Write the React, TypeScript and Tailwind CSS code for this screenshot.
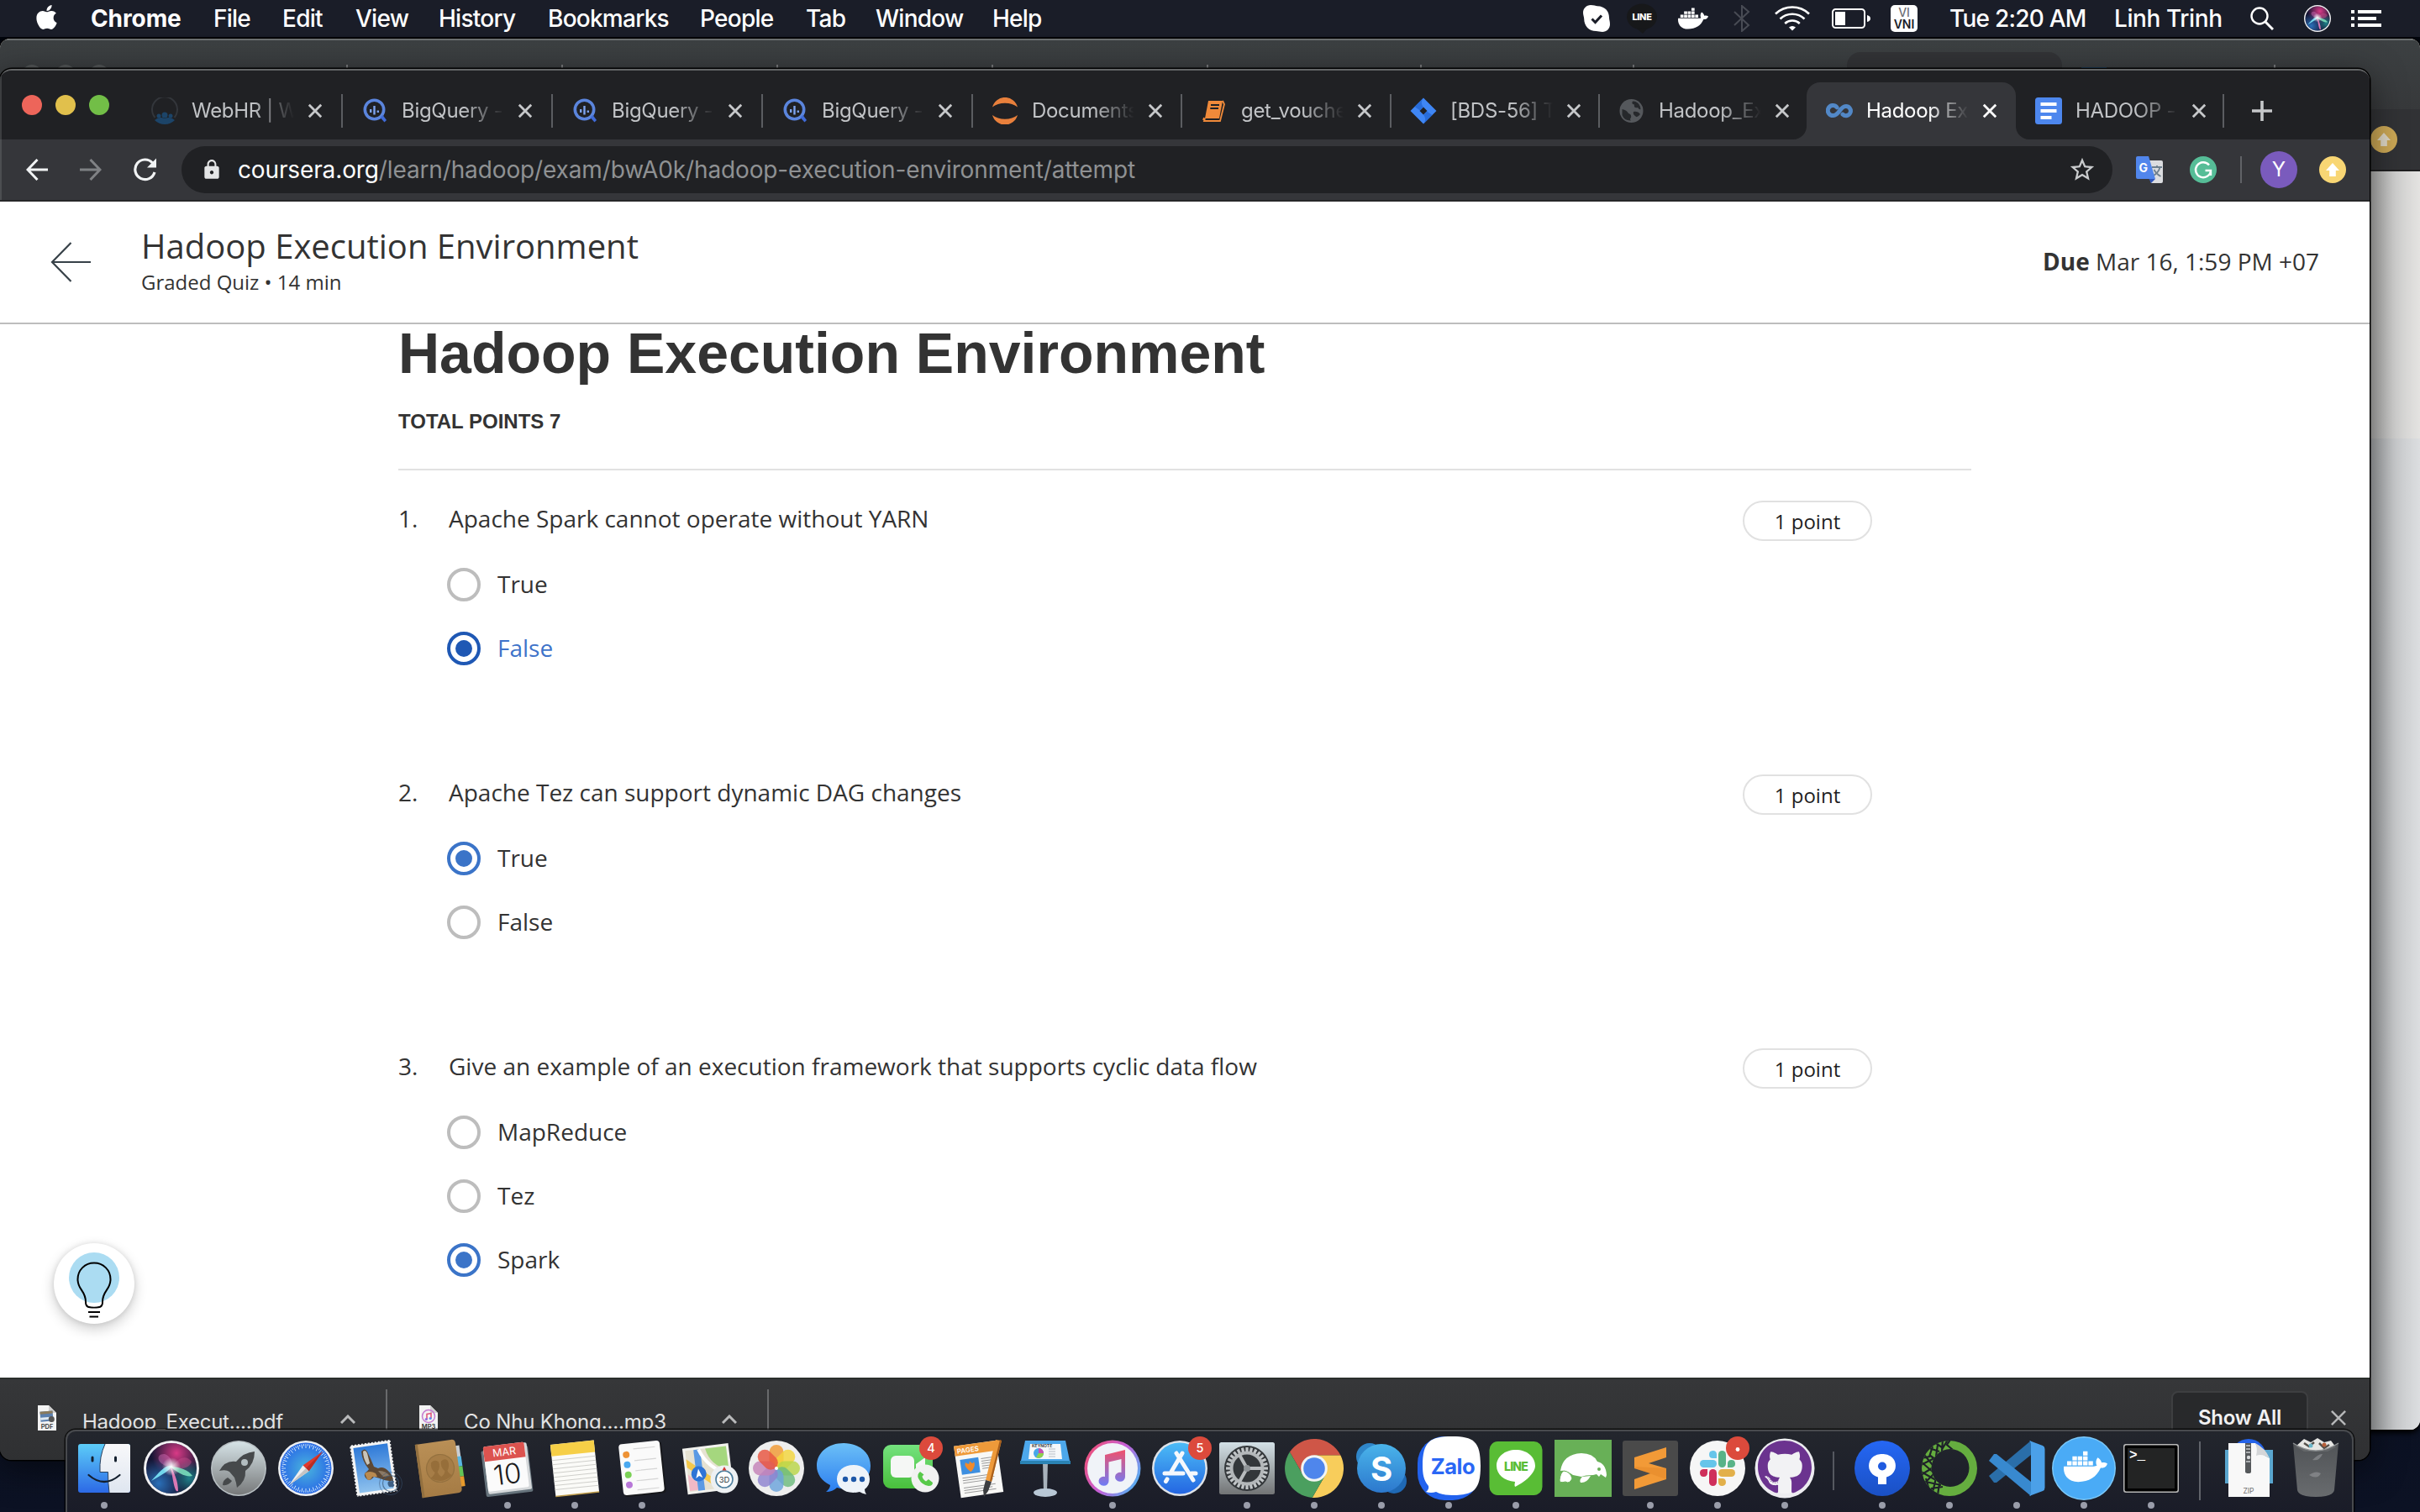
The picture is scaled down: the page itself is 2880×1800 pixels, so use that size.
import type { ReactNode } from "react";
import { FaApple, FaDocker, FaGithub } from "react-icons/fa";
import { MdLock, MdStarBorder } from "react-icons/md";

/* ---------- Menu bar ---------- */

const MENUS = [
  { label: "File", cell: "w-[82px]" },
  { label: "Edit", cell: "w-[87px]" },
  { label: "View", cell: "w-[99px]" },
  { label: "History", cell: "w-[130px]" },
  { label: "Bookmarks", cell: "w-[181px]" },
  { label: "People", cell: "w-[126px]" },
  { label: "Tab", cell: "w-[83px]" },
  { label: "Window", cell: "w-[139px]" },
  { label: "Help", cell: "w-[80px]" },
];

function SiriArt({ r }: { r: number }) {
  return (
    <g transform={`scale(${r / 33})`}>
      <circle r="33" fill="#f1f1f3" />
      <circle r="30" fill="#151433" />
      <circle r="30" fill="url(#siriPink)" />
      <circle r="30" fill="url(#siriBlue)" />
      <circle r="30" fill="url(#siriGreen)" />
      <path d="M-1 -1 C-20 -6 -18 -18 -8 -17 C0 -14 2 -6 1 0 Z" fill="#e07ac9" opacity=".4" />
      <path d="M0 0 C8 -14 18 -16 24 -8 C22 0 10 2 0 0 Z" fill="#c9508f" opacity=".45" />
      <path d="M-24 15 C-14 4 -8 -4 0 -3 C0 2 -12 8 -24 15 Z" fill="#7fefff" opacity=".85" />
      <path d="M-1 -2 C10 -2 20 2 25 9 C18 11 6 5 -1 -2 Z" fill="#7fe6c0" opacity=".85" />
      <path d="M-1 -2 C4 6 8 16 8 27 C4 30 2 14 -1 -2 Z" fill="#f07fbd" opacity=".9" />
      <circle cy="-2" r="11" fill="url(#siriGlow)" />
    </g>
  );
}

function StatusCell({ cell, children }: { cell: string; children: ReactNode }) {
  return <div className={`flex shrink-0 items-center justify-center ${cell}`}>{children}</div>;
}

function MenuBar() {
  return (
    <header className="flex h-11 items-center bg-[#1a1d28] text-[28px] leading-[44px] font-medium tracking-[-0.75px] text-white">
      <div className="flex w-[108px] justify-center pb-1 pl-[2px]">
        <FaApple size={33} />
      </div>
      <div className="w-[146px] font-bold tracking-[-0.1px]">Chrome</div>
      {MENUS.map((m) => (
        <div key={m.label} className={m.cell}>
          {m.label}
        </div>
      ))}
      <div className="ml-auto flex h-11 items-center pr-[44px] whitespace-nowrap">
        <StatusCell cell="w-[54px]">
          <svg width="32" height="32" viewBox="0 0 32 32">
            <path d="M9 0 C13 0 15 1.200 17 1.200 C26 1.500 31 7 31 15 C31 17.500 32 19 32 23 C32 28 28 32 23 32 C20 32 18 31 15.500 31 C7 31 1.200 25 1.200 16.500 C1.200 14 0 12 0 9 C0 4 4 0 9 0 Z" fill="#fff" />
            <path d="M10.500 16.500 L14.500 20.500 L22 12.500" stroke="#1a1d28" strokeWidth="3" fill="none" />
          </svg>
        </StatusCell>
        <StatusCell cell="w-[54px]">
          <svg width="36" height="36" viewBox="0 0 36 36">
            <ellipse cx="18" cy="16" rx="18" ry="15.500" fill="#17181a" />
            <path d="M12 30 L19 36 L25 29 Z" fill="#17181a" />
            <text x="18" y="20" textAnchor="middle" fontFamily="Inter" fontWeight="800" fontSize="11" letterSpacing="-0.4" fill="#fff">LINE</text>
          </svg>
        </StatusCell>
        <StatusCell cell="w-[68px]">
          <FaDocker size={36} />
        </StatusCell>
        <StatusCell cell="w-[48px]">
          <svg width="20" height="32" viewBox="0 0 20 32" fill="none" stroke="#484b54" strokeWidth="2">
            <path d="M1 8 L18 24 L10 31 V1 L18 8 L1 24" />
          </svg>
        </StatusCell>
        <StatusCell cell="w-[72px]">
          <svg width="42" height="30" viewBox="0 0 42 30" fill="none" stroke="#fff" strokeWidth="2.600">
            <path d="M1 9.500 A29 29 0 0 1 41 9.500" />
            <path d="M6.500 15.500 A21 21 0 0 1 35.500 15.500" />
            <path d="M12.200 21 A13 13 0 0 1 29.800 21" />
            <path d="M17 25.500 A6 6 0 0 1 25 25.500 L21 29.500 Z" fill="#fff" stroke="none" />
          </svg>
        </StatusCell>
        <StatusCell cell="w-[68px]">
          <svg width="46" height="24" viewBox="0 0 46 24">
            <rect x="1" y="1" width="38" height="22" rx="3.500" fill="none" stroke="#fff" strokeWidth="2" />
            <rect x="4" y="4" width="12" height="16" fill="#fff" />
            <path d="M42 8 Q46 9 46 12 Q46 15 42 16 Z" fill="#fff" />
          </svg>
        </StatusCell>
        <StatusCell cell="w-[58px]">
          <div className="flex h-8 w-8 flex-col items-center rounded-[5px] bg-white pt-[2px] text-[14px] leading-[14px] font-semibold tracking-normal text-[#1a1d28]">
            <span className="font-medium text-[#6d6f77]">VI</span>
            <span>VNI</span>
          </div>
        </StatusCell>
        <div className="ml-[25px] w-[196px]">Tue 2:20 AM</div>
        <div className="w-[148px] tracking-[-0.4px]">Linh Trinh</div>
        <StatusCell cell="w-[56px]">
          <svg width="28" height="28" viewBox="0 0 28 28" fill="none" stroke="#fff" strokeWidth="2.400">
            <circle cx="11" cy="11" r="9.500" />
            <path d="M18 18 L27 27" strokeWidth="3" />
          </svg>
        </StatusCell>
        <StatusCell cell="w-[76px]">
          <svg width="32" height="32" viewBox="-16 -16 32 32">
            <SiriArt r={16} />
          </svg>
        </StatusCell>
        <StatusCell cell="w-[40px]">
          <svg width="36" height="20" viewBox="0 0 36 20" fill="#fff">
            <path d="M0 0h4v4h-4z M8 0h28v4h-28z M0 8h4v4h-4z M8 8h22v4h-22z M0 16h4v4h-4z M8 16h28v4h-28z" />
          </svg>
        </StatusCell>
      </div>
    </header>
  );
}

/* ---------- Window behind ---------- */

function BackWindow() {
  return (
    <div className="absolute top-[46px] left-0 flex h-[1656px] w-[2880px] flex-col overflow-hidden rounded-[12px] bg-[#e3e2e1] shadow-[0_0_0_1px_#000,0_4px_6px_#000]">
      <div className="relative flex h-[84px] shrink-0 items-start border-t-2 border-[#6b6f70] bg-linear-to-b from-[#3c4042] to-[#37393b]">
        <div className="flex pt-[29px] pl-[26px]">
          <span className="mr-4 size-6 rounded-full bg-[#535657]" />
          <span className="mr-4 size-6 rounded-full bg-[#535657]" />
          <span className="size-6 rounded-full bg-[#535657]" />
        </div>
        {["ml-[282px]", "ml-[254px]", "ml-[254px]", "ml-[254px]", "ml-[254px]", "ml-[252px]", "ml-[251px]"].map((m, i) => (
          <span key={i} className={`mt-[29px] h-10 w-[2px] bg-[#77797b] ${m}`} />
        ))}
        <span className="mt-[14px] ml-[253px] h-[70px] w-[256px] rounded-t-2xl bg-[#323336]" />
        <span className="mt-[32px] ml-[23px] h-8 w-[30px] bg-[#2f6490]" />
        <span className="mt-[29px] ml-[199px] h-10 w-[2px] bg-[#77797b]" />
      </div>
      <div className="flex h-[74px] shrink-0 items-center justify-end border-b-2 border-[#1f1f20] bg-[#313235] pr-[27px]">
        <span className="flex size-8 items-center justify-center rounded-full bg-[#cba755]">
          <UpArrow color="#ddd6c4" />
        </span>
      </div>
      <div className="flex h-[318px] shrink-0 justify-end bg-[#e5e4e2]">
        <div className="w-[60px] bg-linear-to-r from-[#a9a9a8] via-[#cfcfce] to-[#e4e3e1]" />
      </div>
      <div className="flex flex-1 justify-end bg-[#dcdee0]">
        <div className="w-[60px] bg-linear-to-r from-[#9fa1a3] via-[#c8cacc] to-[#dcdee0]" />
      </div>
    </div>
  );
}

function UpArrow({ color }: { color: string }) {
  return (
    <svg width="16" height="16" viewBox="0 0 16 16" fill={color}>
      <path d="M8 0 L16 9 H11.800 V16 H4.200 V9 H0 Z" />
    </svg>
  );
}

/* ---------- Browser tabs ---------- */

const BigQueryIcon = (
  <svg width="32" height="32" viewBox="0 0 32 32" fill="none">
    <circle cx="15.500" cy="14.500" r="11.200" stroke="#5b85dd" strokeWidth="3.600" />
    <path d="M22.500 24 L25.500 21 L30 27 L27.500 29.500 Z" fill="#3f6ad8" />
    <path d="M11.200 14 V18 M15.500 10 V20.500 M19.800 15.500 V18" stroke="#7ea4ef" strokeWidth="2.400" />
  </svg>
);

const TABS: { title: string; cell: string; icon: ReactNode; active?: boolean; sep?: boolean }[] = [
  {
    title: "WebHR | W",
    cell: "w-[250px]",
    sep: true,
    icon: (
      <svg width="32" height="32" viewBox="0 0 32 32">
        <path d="M4.500 24 A15 15 0 1 1 27.500 24" fill="none" stroke="#33363b" strokeWidth="2" />
        <g fill="#1c4468">
          <circle cx="16" cy="21" r="3.500" />
          <circle cx="9" cy="22" r="2.500" />
          <circle cx="23" cy="22" r="2.500" />
          <path d="M4 27 Q9 22.500 16 25 Q23 22.500 28 27 Q23 32 16 32 Q9 32 4 27 Z" />
        </g>
      </svg>
    ),
  },
  { title: "BigQuery -", cell: "w-[250px]", sep: true, icon: BigQueryIcon },
  { title: "BigQuery -", cell: "w-[250px]", sep: true, icon: BigQueryIcon },
  { title: "BigQuery -", cell: "w-[250px]", sep: true, icon: BigQueryIcon },
  {
    title: "Documents",
    cell: "w-[249px]",
    sep: true,
    icon: (
      <svg width="32" height="32" viewBox="0 0 32 32" fill="#e8803c">
        <path d="M1 11.500 A15.500 15.500 0 0 1 31 11.500 A20 14 0 0 0 1 11.500 Z" />
        <path d="M1 21 A15.500 15.500 0 0 0 31 21 A20 14 0 0 1 1 21 Z" />
      </svg>
    ),
  },
  {
    title: "get_vouche",
    cell: "w-[249px]",
    sep: true,
    icon: (
      <svg width="32" height="32" viewBox="0 0 32 32">
        <path d="M9 4 H26 L22 25 H5 Z" fill="#f08a3a" />
        <path d="M26 4 L28 8 L23 28 H4 L5 25 M4 24 L3 27" fill="none" stroke="#f08a3a" strokeWidth="1.800" />
        <path d="M12 9 H22 M11.300 13 H21" stroke="#202124" strokeWidth="1.800" />
      </svg>
    ),
  },
  {
    title: "[BDS-56] T",
    cell: "w-[248px]",
    sep: true,
    icon: (
      <svg width="32" height="32" viewBox="0 0 32 32">
        <path d="M16 0.500 L31.500 16 L16 31.500 L0.500 16 Z M16 11.500 L11.500 16 L16 20.500 L20.500 16 Z" fill="#3f86f4" fillRule="evenodd" />
        <path d="M16 0.500 Q11.500 6 16 11.500 L12 15.500 L5.500 11 Z M16 31.500 Q20.500 26 16 20.500 L20 16.500 L26.500 21 Z" fill="#2263cf" opacity=".75" />
      </svg>
    ),
  },
  {
    title: "Hadoop_Ex",
    cell: "w-[247px]",
    icon: (
      <svg width="32" height="32" viewBox="0 0 32 32">
        <circle cx="15.500" cy="16" r="14" fill="#55585c" />
        <path d="M4.500 14 Q10 15 12 19 Q16 20 15 24 Q13 26 15 27.500 Q7 28 4.500 21 Z M17 4.500 Q15 8 19 8.500 Q18 13 23 12 Q25 15 26.500 14 Q26 7 20 4.700 Z M18 17 Q23 16 26 20 Q22 25 20 22 Q17 20 18 17 Z" fill="#26282b" />
      </svg>
    ),
  },
  {
    title: "Hadoop Ex",
    cell: "w-[249px]",
    active: true,
    icon: (
      <svg width="32" height="32" viewBox="0 0 32 32" fill="none" stroke="#5288c7" strokeWidth="5" strokeLinecap="round">
        <path d="M13 11.800 A6 6 0 1 0 9 21.500 C15.500 21.500 17 10.500 23.500 10.500 A5.600 5.600 0 1 1 20 20.200" />
      </svg>
    ),
  },
  {
    title: "HADOOP -",
    cell: "w-[247px]",
    sep: true,
    icon: (
      <svg width="32" height="32" viewBox="0 0 32 32">
        <rect width="32" height="32" rx="3.500" fill="#4d87ee" />
        <path d="M6.500 6h19v4h-19z M6.500 14h19v4h-19z M6.500 22h13v4h-13z" fill="#fff" />
      </svg>
    ),
  },
];

function Cross({ size, color, width = 2.8 }: { size: number; color: string; width?: number }) {
  return (
    <svg width={size} height={size} viewBox="0 0 16 16" stroke={color} strokeWidth={width} className="shrink-0 overflow-visible">
      <path d="M0.800 0.800 L15.200 15.200 M15.200 0.800 L0.800 15.200" />
    </svg>
  );
}

function TabStrip() {
  return (
    <div className="flex h-[82px] shrink-0 items-end bg-[#202124] shadow-[inset_2px_0_0_#3c3e40]">
      <div className="flex h-[68px] w-[157px] shrink-0 pt-[15px] pl-[26px]">
        <span className="mr-4 size-6 rounded-full bg-[#ed655a]" />
        <span className="mr-4 size-6 rounded-full bg-[#e1c04c]" />
        <span className="size-6 rounded-full bg-[#72be47]" />
      </div>
      {TABS.map((t, i) => (
        <div
          key={i}
          className={`relative flex h-[68px] shrink-0 items-center pl-[23px] ${t.cell} ${
            t.active ? "rounded-t-2xl bg-[#35363a] text-white" : "text-[#c1c3c6]"
          }`}
        >
          {t.active && (
            <>
              <svg className="absolute bottom-0 -left-4" width="16" height="16">
                <path d="M0 16 A16 16 0 0 0 16 0 V16 Z" fill="#35363a" />
              </svg>
              <svg className="absolute -right-4 bottom-0" width="16" height="16">
                <path d="M16 16 A16 16 0 0 1 0 0 V16 Z" fill="#35363a" />
              </svg>
            </>
          )}
          <span className="shrink-0">{t.icon}</span>
          <span className="ml-4 w-[122px] shrink-0 overflow-hidden mask-r-from-60% mask-r-to-100% text-[24px] leading-[34px] tracking-[-0.3px] whitespace-nowrap">
            {t.title}
          </span>
          <span className="ml-[17px]">
            <Cross size={16} color={t.active ? "#fff" : "#c6c8ca"} />
          </span>
          {t.sep && <span className="absolute right-[-1px] h-10 w-[2px] bg-[#5b5d61]" />}
        </div>
      ))}
      <div className="flex h-[68px] w-[92px] items-center justify-center">
        <svg width="24" height="24" viewBox="0 0 24 24" stroke="#c6c8ca" strokeWidth="3.600">
          <path d="M12 0 V24 M0 12 H24" />
        </svg>
      </div>
    </div>
  );
}

/* ---------- Toolbar ---------- */

function Toolbar() {
  return (
    <div className="flex h-[72px] shrink-0 items-center bg-[#35363a] shadow-[inset_2px_0_0_#4c4e51]">
      <div className="flex w-[216px] shrink-0 items-center pl-[31px]">
        <svg width="26" height="26" viewBox="0 0 26 26" fill="none" stroke="#f1f3f4" strokeWidth="3">
          <path d="M26 13 H2 M13.500 1 L2 13 L13.500 25" />
        </svg>
        <svg className="ml-[38px]" width="26" height="26" viewBox="0 0 26 26" fill="none" stroke="#7f8184" strokeWidth="3">
          <path d="M0 13 H24 M12.500 1 L24 13 L12.500 25" />
        </svg>
        <svg className="ml-[38px]" width="28" height="28" viewBox="0 0 28 28" fill="none" stroke="#f1f3f4" strokeWidth="3.200">
          <path d="M25 17 A11.800 11.800 0 1 1 22.500 6" />
          <path d="M27 0.500 V11.500 H16 Z" fill="#f1f3f4" stroke="none" />
        </svg>
      </div>
      <div className="flex h-14 w-[2298px] shrink-0 items-center rounded-full bg-[#202124] pl-[23px]">
        <MdLock size={26} color="#e4e5e6" />
        <div className="ml-[18px] text-[28px] leading-10 tracking-[-0.13px] whitespace-nowrap text-[#8f9193]">
          <span className="text-white">coursera.org</span>
          <span>/learn/hadoop/exam/bwA0k/hadoop-execution-environment/attempt</span>
        </div>
        <MdStarBorder size={34} color="#c9cbcd" className="mr-[19px] ml-auto" />
      </div>
      <svg className="ml-[28px] shrink-0" width="32" height="32" viewBox="0 0 32 32">
        <path d="M12 5 H30 Q32 5 32 7 V30 Q32 32 30 32 H18 Z" fill="#dcdde0" />
        <path d="M19 13 H31 M25 11 V13 M28.500 13 Q27 20 19 24 M21.500 16 Q24 21 29.500 24" stroke="#6f8190" strokeWidth="1.800" fill="none" />
        <path d="M2 0 H15 L23 27 H2 Q0 27 0 25 V2 Q0 0 2 0 Z" fill="#5186ec" />
        <path d="M15.500 27 H23 L18 32 Z" fill="#2f54b8" />
        <text x="3.500" y="18.500" fontFamily="Inter" fontWeight="700" fontSize="14" fill="#fff">G</text>
      </svg>
      <svg className="ml-[32px] shrink-0" width="32" height="32" viewBox="0 0 32 32">
        <circle cx="16" cy="16" r="16" fill="#56bd97" />
        <path d="M23 10.500 A9 9 0 1 0 25 17 H18.500 M25 17 V23" fill="none" stroke="#fff" strokeWidth="2.400" />
      </svg>
      <span className="ml-[28px] h-8 w-[2px] shrink-0 bg-[#606266]" />
      <span className="ml-[22px] flex size-11 shrink-0 items-center justify-center rounded-full bg-[#7a5bbd] text-[24px] leading-none text-white">
        Y
      </span>
      <span className="ml-[26px] flex size-8 shrink-0 items-center justify-center rounded-full bg-[#f8d674]">
        <UpArrow color="#fff" />
      </span>
    </div>
  );
}

/* ---------- Page ---------- */

type Choice = { text: string; selected?: boolean; focused?: boolean };

const QUESTIONS: { text: string; choices: Choice[] }[] = [
  {
    text: "Apache Spark cannot operate without YARN",
    choices: [{ text: "True" }, { text: "False", selected: true, focused: true }],
  },
  {
    text: "Apache Tez can support dynamic DAG changes",
    choices: [{ text: "True", selected: true }, { text: "False" }],
  },
  {
    text: "Give an example of an execution framework that supports cyclic data flow",
    choices: [{ text: "MapReduce" }, { text: "Tez" }, { text: "Spark", selected: true }],
  },
];

function Radio({ selected, focused }: Choice) {
  const ring = focused ? "border-[#1f58b4]" : selected ? "border-[#3b74c8]" : "border-[#bdbdbd]";
  const dot = focused ? "bg-[#1f58b4]" : "bg-[#3b74c8]";
  return (
    <span className={`flex size-10 shrink-0 items-center justify-center rounded-full border-4 ${ring}`}>
      {selected && <span className={`size-5 rounded-full ${dot}`} />}
    </span>
  );
}

function Question({ index, text, choices }: { index: number; text: string; choices: Choice[] }) {
  return (
    <section className="h-[326px]">
      <div className="flex h-12 items-center">
        <div className="w-[60px] pb-[6px]">{index}.</div>
        <div className="flex-1 pb-[6px]">{text}</div>
        <div className="mr-[118px] flex h-12 w-[154px] items-center justify-center rounded-[24px] border-2 border-[#e1e1e1] pt-[1px] text-[24px] text-[#1f1f1f]">
          1 point
        </div>
      </div>
      <div className="flex flex-col gap-9 pt-8 pl-[58px]">
        {choices.map((c) => (
          <label key={c.text} className="flex h-10 items-center gap-5">
            <Radio {...c} />
            <span className={`pb-[2px] ${c.focused ? "text-[#3e73c9]" : ""}`}>{c.text}</span>
          </label>
        ))}
      </div>
    </section>
  );
}

function Page() {
  return (
    <main className="flex h-[1400px] shrink-0 flex-col overflow-hidden bg-white font-['Open_Sans',sans-serif] text-[28px] leading-10 tracking-normal text-[#333]">
      <div className="flex h-[146px] shrink-0 items-center border-b-2 border-[#bdbdbd]">
        <svg className="ml-[60px]" width="48" height="48" viewBox="0 0 48 48" fill="none" stroke="#374148" strokeWidth="2.200">
          <path d="M48 24 H2 M24.500 1 L2 24 L24.500 47" />
        </svg>
        <div className="flex flex-col pb-[3px] pl-[60px]">
          <h1 className="text-[40px] leading-[48px]">Hadoop Execution Environment</h1>
          <div className="mt-[3px] text-[24px] leading-8">Graded Quiz • 14 min</div>
        </div>
        <div className="mr-[60px] ml-auto pb-[2px]">
          <b className="font-bold">Due</b> Mar 16, 1:59 PM +07
        </div>
      </div>
      <div className="ml-[474px] w-[1872px] shrink-0">
        <h2 className="font-['Liberation_Sans',sans-serif] text-[68px] leading-[68px] font-bold">
          Hadoop Execution Environment
        </h2>
        <div className="mt-[30px] h-[76px] border-b-2 border-[#e1e1e1] font-['Liberation_Sans',sans-serif] text-[24px] leading-9 font-bold">
          TOTAL POINTS 7
        </div>
        <div className="mt-9">
          {QUESTIONS.map((q, i) => (
            <Question key={i} index={i + 1} {...q} />
          ))}
        </div>
      </div>
      <button className="absolute top-[1396px] left-[64px] flex size-24 items-center justify-center rounded-full bg-white shadow-[0_6px_16px_rgba(0,0,0,0.2),0_0_6px_rgba(0,0,0,0.1)]">
        <svg width="96" height="96" viewBox="0 0 96 96">
          <circle cx="48" cy="41" r="30" fill="#abdcf2" />
          <path d="M48 23.500 C59 23.500 67.500 32 67.500 43 C67.500 56 58 56 58 70 C58 76 55 76.500 48 76.500 C41 76.500 38 76 38 70 C38 56 28.500 56 28.500 43 C28.500 32 37 23.500 48 23.500 Z" fill="none" stroke="#000" strokeWidth="2" />
          <path d="M39 70.500 Q41 71.500 48 71.500 Q55 71.500 57 70.500 Q56.500 75.500 48 75.500 Q39.500 75.500 39 70.500 Z" fill="#fff" />
          <path d="M41 82 H55 M42.500 87.500 H53" stroke="#000" strokeWidth="2" />
        </svg>
      </button>
    </main>
  );
}

/* ---------- Downloads bar ---------- */

function FileIcon({ kind }: { kind: "PDF" | "MP3" }) {
  return (
    <svg width="24" height="30" viewBox="0 0 24 30" className="shrink-0">
      <path d="M1 0 H14 L23 9 V30 H1 Z" fill="#f3f3f3" />
      <path d="M14 0 L23 9 H14 Z" fill="#cfcfcf" />
      {kind === "PDF" ? (
        <g transform="rotate(-5 12 13)">
          <rect x="4" y="7" width="15" height="12" fill="#5b7fae" />
          <rect x="4" y="7" width="15" height="3" fill="#8a7a5c" />
          <rect x="4" y="14" width="15" height="3" fill="#dfe9f2" />
          <circle cx="17" cy="17" r="3.500" fill="#555" />
        </g>
      ) : (
        <g fill="none">
          <circle cx="12" cy="13" r="7.500" stroke="#c57bd0" strokeWidth="1.500" />
          <path d="M10 16.500 V10.500 L15 9.500 V15.500" stroke="#e0587f" strokeWidth="1.600" />
          <circle cx="9.300" cy="16.500" r="1.600" fill="#8f6be0" />
          <circle cx="14.200" cy="15.500" r="1.600" fill="#5f8cf0" />
        </g>
      )}
      <text x="12" y="28" textAnchor="middle" fontFamily="Inter" fontWeight="600" fontSize="7.500" fill="#333">{kind}</text>
    </svg>
  );
}

function Caret({ className }: { className: string }) {
  return (
    <svg className={`shrink-0 ${className}`} width="18" height="11" viewBox="0 0 18 11" fill="none" stroke="#b9babb" strokeWidth="3">
      <path d="M1 10 L9 2 L17 10" />
    </svg>
  );
}

function DownloadsBar() {
  return (
    <div className="flex flex-1 items-start border-t-2 border-[#2b2f2c] bg-linear-to-b from-[#363739] to-[#2f3032] text-[24px] leading-8 whitespace-nowrap text-[#e2e3e4]">
      <div className="mt-3 -mb-3 flex h-[90px] w-[461px] items-start border-r-2 border-[#696a6c] pt-8 pl-[44px]">
        <div className="-mt-[13px]">
          <FileIcon kind="PDF" />
        </div>
        <div className="-mt-[9px] ml-[30px] w-[240px] tracking-[-0.25px]">Hadoop_Execut....pdf</div>
        <Caret className="mt-[-2px] ml-[67px]" />
      </div>
      <div className="mt-3 -mb-3 flex h-[90px] w-[454px] items-start border-r-2 border-[#696a6c] pt-8 pl-[37px]">
        <div className="-mt-[13px]">
          <FileIcon kind="MP3" />
        </div>
        <div className="-mt-[9px] ml-[30px] w-[240px] tracking-[-0.15px]">Co Nhu Khong....mp3</div>
        <Caret className="mt-[-2px] ml-[67px]" />
      </div>
      <div className="mt-[14px] ml-auto flex h-[60px] w-[163px] justify-center rounded-lg border-2 border-[#3e3f41] bg-[#28292b] pt-[14px] font-semibold tracking-[-0.2px] text-[#f1f1f2]">
        Show All
      </div>
      <div className="mt-[37px] mr-[28px] ml-[27px]">
        <Cross size={18} color="#b6b7b8" width={2.2} />
      </div>
    </div>
  );
}

function BrowserWindow() {
  return (
    <div className="absolute top-[82px] left-0 flex h-[1656px] w-[2820px] flex-col overflow-hidden rounded-[14px] border-t-2 border-[#636566] bg-[#35363a] shadow-[0_0_0_1.500px_#000,0_10px_40px_rgba(0,0,0,0.5)]">
      <TabStrip />
      <Toolbar />
      <div className="h-[2px] shrink-0 bg-[#262728]" />
      <Page />
      <DownloadsBar />
    </div>
  );
}

/* ---------- Dock ---------- */

function Badge({ x, y, children }: { x: number; y: number; children: string }) {
  return (
    <g>
      <circle cx={x} cy={y} r="14" fill="#dc4a3c" />
      <text x={x} y={y + 5} textAnchor="middle" fontFamily="Inter" fontSize="14.500" fontWeight="500" fill="#fff">{children}</text>
    </g>
  );
}

const PETALS = [
  { a: 0, c: "#f09a33" },
  { a: 45, c: "#f3d63c" },
  { a: 90, c: "#b9d548" },
  { a: 135, c: "#6dbb7c" },
  { a: 180, c: "#6ba4dc" },
  { a: 225, c: "#8d82cf" },
  { a: 270, c: "#c583b8" },
  { a: 315, c: "#e8543f" },
];

const TICKS = Array.from({ length: 36 }, (_, i) => i * 10);
const TEETH = Array.from({ length: 28 }, (_, i) => (i * 360) / 28);

const APPS: { name: string; running?: boolean; art: ReactNode }[] = [
  {
    name: "Finder",
    running: true,
    art: (
      <g>
        <rect x="-31" y="-29" width="62" height="58" rx="3" fill="url(#finderBlue)" />
        <path d="M1 -29 H28 Q31 -29 31 -26 V26 Q31 29 28 29 H6 Q4.500 18 4.500 4.500 H-5 Q-6 -14 1 -29 Z" fill="url(#finderWhite)" />
        <path d="M1 -29 Q-6 -14 -5 4.500 H4.500 Q4.500 18 6 29" fill="none" stroke="#28405e" strokeWidth="1" />
        <path d="M-14 -13 V-9 M13.500 -13 V-9" stroke="#14202e" strokeWidth="3" strokeLinecap="round" />
        <path d="M-18.500 8 Q0 24 18.500 8" fill="none" stroke="#14202e" strokeWidth="2.200" strokeLinecap="round" />
      </g>
    ),
  },
  { name: "Siri", art: <SiriArt r={33} /> },
  {
    name: "Launchpad",
    art: (
      <g>
        <circle r="33" fill="#b9c0c4" />
        <circle r="31.500" fill="url(#launch)" />
        <path d="M19 -20 Q6 -19 -3 -8 Q-16 -10 -23 3 Q-15 1 -11 4 L-5 11 Q-3 16 -2 23 Q9 15 8 3 Q19 -5 19 -20 Z" fill="#46494b" />
        <circle cx="7" cy="-7" r="4" fill="#b3bdc0" />
        <path d="M-13 11 Q-19 14 -19 20 Q-12 21 -8 15 Z" fill="#46494b" />
      </g>
    ),
  },
  {
    name: "Safari",
    art: (
      <g>
        <circle r="33" fill="#eef0f2" />
        <circle r="30.500" fill="url(#safari)" />
        {TICKS.map((a) => (
          <path key={a} d="M0 -29 V-24 M2.500 -28.900 L2.300 -26.500" stroke="#d6ecfb" strokeWidth=".9" transform={`rotate(${a})`} />
        ))}
        <path d="M20 -20 L-3.500 -3.500 L3.500 3.500 Z" fill="#e0392c" />
        <path d="M20 -20 L3.500 3.500 L0 0 Z" fill="#b92d24" />
        <path d="M-20 20 L-3.500 -3.500 L3.500 3.500 Z" fill="#efefef" />
        <path d="M-20 20 L3.500 3.500 L0 0 Z" fill="#c4c4c4" />
      </g>
    ),
  },
  {
    name: "Mail",
    art: (
      <g>
        <g transform="rotate(-8)">
          <rect x="-24" y="-31" width="49" height="62" fill="#f4f4f4" />
          <rect x="-24" y="-31" width="49" height="62" fill="none" stroke="#20232c" strokeWidth="2" strokeDasharray="2 2" />
          <rect x="-20" y="-27" width="41" height="54" fill="url(#mailSky)" />
        </g>
        <path d="M-14 -20 Q-10 -25 -7 -20 Q-3 -12 1 -2 L6 0 Q12 -3 18 3 Q24 9 24 15 Q16 16 8 12 L1 10 Q-4 16 -7 13 Q-11 10 -10 6 Q-6 3 -5 1 Q-13 -8 -14 -20 Z" fill="#5d4834" />
        <path d="M-12 -20 Q-9 -23 -7 -18 L-4 -6 L-7 -4 Q-12 -12 -12 -20 Z" fill="#c9c4ba" />
        <path d="M-10 6 Q-4 2 3 6 L5 10 L-1 10 Q-4 16 -7 13 Z" fill="#b98a50" />
        <path d="M6 3 Q14 2 20 9 L12 10 Z" fill="#8b7a66" />
        <circle cx="21" cy="18" r="9.500" fill="none" stroke="#3b5878" strokeWidth="1.200" opacity=".7" />
        <circle cx="21" cy="18" r="13.500" fill="none" stroke="#3b5878" strokeWidth="1" opacity=".5" />
        <FaApple x={16} y={12} size={11} color="#3d5f85" />
      </g>
    ),
  },
  {
    name: "Contacts",
    art: (
      <g transform="rotate(-8)">
        <path d="M18 -24 h8 v14 h-8 z" fill="#c9cdd1" />
        <path d="M18 -11 h8.500 v12 h-8.500 z" fill="#59b6e2" />
        <path d="M18 1 h8.500 v12 h-8.500 z" fill="#63c557" />
        <path d="M18 13 h8.500 v12 h-8.500 z" fill="#e79a2c" />
        <path d="M-26 -32 H17 Q22 -32 22 -27 V27 Q22 32 17 32 H-26 Z" fill="url(#leather)" />
        <path d="M-26 -32 H-23 V32 H-26 Z" fill="#93703f" />
        <circle r="16.500" fill="#a67d47" stroke="#94713f" strokeWidth="1.200" />
        <path d="M-13 10 Q-8 7 -7 4 Q-12 -1 -10 -8 Q-6 -12 -1 -8 Q1 -2 -4 4 Q-3 8 0 10 Q4 8 5 4 Q0 -1 2 -8 Q6 -12 10 -8 Q12 -2 8 4 Q9 8 13 10 Q0 20 -13 10 Z" fill="#966e3a" />
      </g>
    ),
  },
  {
    name: "Calendar",
    running: true,
    art: (
      <g transform="rotate(-7)">
        <rect x="-29" y="-24" width="56" height="55" rx="2" fill="#66737c" />
        <rect x="-26" y="-28" width="52" height="56" rx="2" fill="#d5d8da" />
        <rect x="-26" y="-29" width="49" height="54" rx="2" fill="#fbfbfb" />
        <path d="M-24 -29 H21 Q23 -29 23 -27 V-11 H-26 V-27 Q-26 -29 -24 -29 Z" fill="#dc534f" />
        <text x="-1.500" y="-15.500" textAnchor="middle" fontFamily="Inter" fontSize="12.500" fill="#fff">MAR</text>
        <text x="-1" y="18.500" textAnchor="middle" fontFamily="Inter" fontWeight="300" fontSize="33" fill="#1c1c1c">10</text>
      </g>
    ),
  },
  {
    name: "Notes",
    running: true,
    art: (
      <g transform="rotate(-6)">
        <rect x="-26" y="-31" width="52" height="62" fill="#fbfbf8" />
        <rect x="-26" y="-31" width="52" height="14" fill="#f6cf47" />
        <path d="M-26 -12 h52 M-26 -7 h52 M-26 -2 h52 M-26 3 h52 M-26 8 h52 M-26 13 h52 M-26 18 h52 M-26 23 h52" stroke="#cfcfcb" strokeWidth="1" />
        <path d="M-26 31 h52" stroke="#bf9c4a" strokeWidth="1.500" />
      </g>
    ),
  },
  {
    name: "Reminders",
    running: true,
    art: (
      <g transform="rotate(-6)">
        <rect x="-24" y="-30" width="50" height="62" rx="4" fill="#17181c" />
        <rect x="-25" y="-31" width="49" height="61" rx="4" fill="#fafafa" />
        <path d="M-8 -24 h26 M-8 -10 h26 M-8 2 h26 M-8 14 h26 M-8 25 h26" stroke="#d5d5d5" strokeWidth="1.200" />
        <circle cx="-17" cy="-18" r="4" fill="#ee9336" />
        <circle cx="-17" cy="-6" r="4" fill="#4aa9f0" />
        <circle cx="-17" cy="6" r="4" fill="#7bd156" />
        <circle cx="-17" cy="18" r="4" fill="#b878d8" />
      </g>
    ),
  },
  {
    name: "Maps",
    art: (
      <g>
        <g transform="rotate(-7)">
          <rect x="-29" y="-27" width="55" height="55" fill="#f2f2ee" />
          <rect x="-26" y="-24" width="49" height="49" fill="#e6e2d2" />
          <path d="M-2 -24 H23 V4 Q2 -2 -2 -24 Z" fill="#a5d77e" />
          <path d="M-26 4 L-8 24 H-26 Z" fill="#f1b9c6" />
          <path d="M-26 -4 L8 25 H18 L-26 -14 Z" fill="#f4c84b" />
          <path d="M-16 -24 H-8 V25 H-16 Z" fill="#5a9ae4" />
          <path d="M-10 -24 Q-2 0 23 10" fill="none" stroke="#fff" strokeWidth="4" />
          <circle cx="-13" cy="5" r="9" fill="#2e74d6" />
          <path d="M-13 -1 L-9 10 L-13 7.500 L-17 10 Z" fill="#fff" />
        </g>
        <circle cx="18" cy="13" r="16.500" fill="#eef1f3" />
        <circle cx="18" cy="13" r="10" fill="#fff" stroke="#4d7f9e" strokeWidth="1.600" />
        <path d="M18 -2 L20.500 2.500 H15.500 Z" fill="#d03b33" />
        <text x="18" y="17" textAnchor="middle" fontFamily="Inter" fontSize="9.500" fill="#2f3a40">3D</text>
      </g>
    ),
  },
  {
    name: "Photos",
    art: (
      <g>
        <circle r="33" fill="#eeeeee" />
        {PETALS.map((p) => (
          <rect key={p.a} x="-8.500" y="-28" width="17" height="27" rx="8.500" fill={p.c} opacity=".82" transform={`rotate(${p.a})`} />
        ))}
        <circle r="2" fill="#fff" />
      </g>
    ),
  },
  {
    name: "Messages",
    art: (
      <g>
        <path d="M0 -30 C18 -30 32 -19 32 -3 C32 13 18 24 0 24 C-3 24 -5 24 -8 23 Q-13 28 -21 28 Q-16 24 -16 20 C-26 15 -32 7 -32 -3 C-32 -19 -18 -30 0 -30 Z" fill="url(#msg)" />
        <path d="M12 -4 C23 -4 31 3 31 13 C31 18 29 22 25 25 Q25 28 27 31 Q22 30 19 28 C3 32 -8 23 -8 13 C-8 3 0 -4 12 -4 Z" fill="#eef3f9" />
        <g fill="#1d57a8">
          <circle cx="2" cy="13" r="3.200" />
          <circle cx="12" cy="13" r="3.200" />
          <circle cx="22" cy="13" r="3.200" />
        </g>
      </g>
    ),
  },
  {
    name: "FaceTime",
    art: (
      <g>
        <rect x="-33" y="-28" width="59" height="52" rx="9" fill="url(#green)" />
        <rect x="-24" y="-15" width="28" height="26" rx="6" fill="#f5f7f5" />
        <path d="M6 -5 L17 -13 V8 L6 2 Z" fill="#f5f7f5" />
        <circle cx="17" cy="12" r="16.500" fill="#f1f2f1" />
        <path d="M11 4 Q7 7 9 12 Q13 20 21 21 Q26 21 26 17 L21 13 L18 15.500 Q14 13 13.500 9.500 L15.500 7.500 Z" fill="#57c949" />
        <Badge x={24} y={-24}>4</Badge>
      </g>
    ),
  },
  {
    name: "Pages",
    art: (
      <g>
        <g transform="rotate(-8)">
          <rect x="-25" y="-30" width="51" height="62" fill="#f8f8f6" />
          <rect x="-25" y="-30" width="51" height="12" fill="#ee9a3a" />
          <text x="-22" y="-20.500" fontFamily="Inter" fontWeight="600" fontSize="8" fill="#fff">PAGES</text>
          <rect x="-20" y="-13" width="22" height="18" fill="#3d8fe0" />
          <path d="M-9 3 Q-17 -4 -14 -9 Q-9 -4 -9 -10 Q-5 -4 -4 -9 Q-1 -4 -9 3 Z" fill="#f08a2c" />
          <path d="M5 -11 h14 M5 -8 h14 M5 -5 h14 M5 -2 h12 M5 1 h14 M-20 9 h36 M-20 12 h38 M-20 15 h36 M-20 21 h38 M-20 24 h34 M-20 27 h38" stroke="#9a9a9a" strokeWidth="1" />
        </g>
        <path d="M21 -34 L28 -33 L16 16 L9 14 Z" fill="#ee9a3a" />
        <path d="M26 -34 L28 -33 L16 16 L14 15 Z" fill="#a85f1c" />
        <path d="M9 14 L16 16 L12 27 L7 34 L6 26 Z" fill="#3b3d40" />
      </g>
    ),
  },
  {
    name: "Keynote",
    art: (
      <g>
        <path d="M-3 -8 H3 L2 28 H-2 Z" fill="#a8b2bb" />
        <ellipse cy="29" rx="14" ry="5" fill="#b9c8d6" />
        <path d="M-24 -33 H24 L29 -9 H-29 Z" fill="#4da8ec" />
        <path d="M-30 -9 H30 V-5 H-30 Z" fill="#2b83b4" />
        <path d="M-18 -29 H18 L20 -11 H-20 Z" fill="#f6f8fa" />
        <text x="-16" y="-25" fontFamily="Inter" fontWeight="700" fontSize="5" fill="#454545">KEYNOTE</text>
        <circle cx="-8" cy="-18" r="6" fill="#46a6e8" />
        <path d="M-8 -18 V-24 A6 6 0 0 1 -2 -18 Z" fill="#c94fb0" />
        <path d="M-8 -18 H-2 A6 6 0 0 1 -11 -13 Z" fill="#8fd04a" />
        <path d="M4 -23 h8 M4 -20 h8 M4 -17 h8 M4 -14 h8" stroke="#b5bcc4" strokeWidth="1" />
      </g>
    ),
  },
  {
    name: "iTunes",
    running: true,
    art: (
      <g>
        <circle r="33.500" fill="url(#itunes)" />
        <circle r="30" fill="#f0f3f8" />
        <path d="M-9 16 V-16 L15 -22 V10 A6 5.500 0 1 1 10.500 5 V-11 L-4.500 -7.500 V15 A6 5.500 0 1 1 -9 10 Z" fill="url(#note)" />
      </g>
    ),
  },
  {
    name: "App Store",
    art: (
      <g>
        <circle r="33" fill="#dfe3e8" />
        <circle r="30.500" fill="url(#appstore)" />
        <g stroke="#f5f8fc" strokeWidth="5" strokeLinecap="round">
          <path d="M3 -18 L-10 4 M-15 13 L-16.500 15.500 M-4 -18 L16 14 M-18 6 H4 M14 6 H19" />
        </g>
        <Badge x={24} y={-24}>5</Badge>
      </g>
    ),
  },
  {
    name: "System Preferences",
    running: true,
    art: (
      <g>
        <rect x="-33" y="-31" width="66" height="62" rx="2.500" fill="url(#prefs)" />
        <circle r="27" fill="#33373a" />
        {TEETH.map((a) => (
          <rect key={a} x="-1.600" y="-25" width="3.200" height="6" fill="#c1c5c7" transform={`rotate(${a})`} />
        ))}
        <circle r="18.500" fill="#33373a" stroke="#b3b7b9" strokeWidth="4" />
        <path d="M0 0 H18 M0 0 L-9 -16 M0 0 L-9 16" stroke="#b7bbbd" strokeWidth="4" />
        <circle r="4" fill="#8f9497" />
      </g>
    ),
  },
  {
    name: "Chrome",
    running: true,
    art: (
      <g>
        <path d="M-29.100 -19.400 A35 35 0 0 1 31.400 -15.500 L0 -15.500 L-13.400 7.750 Z" fill="#cf5647" />
        <path d="M31.400 -15.500 A35 35 0 0 1 -2.300 34.900 L13.400 7.750 L0 -15.500 Z" fill="#f8cd5b" />
        <path d="M-2.300 34.900 A35 35 0 0 1 -29.100 -19.400 L-13.400 7.750 L13.400 7.750 Z" fill="#4b9f5f" />
        <circle r="15.800" fill="#f3f5f3" />
        <circle r="12.800" fill="#4f86ec" />
      </g>
    ),
  },
  {
    name: "Skype",
    running: true,
    art: (
      <g>
        <circle cx="-14" cy="-14" r="16" fill="#2f86c9" />
        <circle cx="15" cy="15" r="15" fill="#1f69b5" />
        <circle r="29" fill="url(#skype)" />
        <text y="14.500" textAnchor="middle" fontFamily="Inter" fontWeight="700" fontSize="40" fill="#fff">S</text>
      </g>
    ),
  },
  {
    name: "Zalo",
    running: true,
    art: (
      <g>
        <rect x="-37" y="-38" width="74" height="76" rx="32" fill="#2262ee" />
        <path d="M4 -38 C30 -38 38 -32 38 -3 C38 26 30 32 4 32 Q-8 32 -15 28 Q-21 30 -27 28 Q-23 25 -24 21 C-30 14 -31 6 -31 -3 C-31 -32 -22 -38 4 -38 Z" fill="#fff" />
        <text x="5" y="7" textAnchor="middle" fontFamily="Inter" fontWeight="700" fontSize="25.500" letterSpacing="-0.5" fill="#2a67f5">Zalo</text>
      </g>
    ),
  },
  {
    name: "LINE",
    running: true,
    art: (
      <g>
        <rect x="-31.500" y="-32" width="63" height="64" rx="10" fill="#59bd35" />
        <path d="M0 -22 C13 -22 23 -14 23 -3 C23 6 10 17 -1 22 Q-2 20 -1 16 C-14 15 -23 7 -23 -3 C-23 -14 -13 -22 0 -22 Z" fill="#fff" />
        <text y="3" textAnchor="middle" fontFamily="Inter" fontWeight="800" fontSize="14" letterSpacing="-0.8" fill="#59bd35">LINE</text>
      </g>
    ),
  },
  {
    name: "Manatee",
    art: (
      <g>
        <rect x="-34" y="-34" width="68" height="68" fill="#68b057" />
        <path d="M-27 3 Q-24 -17 -2 -18 Q12 -18 17 -8 Q27 -6 28 8 L27 11 L21 7 L19 10 L16 7 L12 8 Q2 8 -2 10 L-12 8 Q-20 2 -27 3 Z" fill="#fff" />
        <path d="M-23 3 Q-15 4 -13 12 Q-16 19 -21 16 Q-28 18 -28 14 Q-27 5 -23 3 Z" fill="#fff" stroke="#68b057" strokeWidth="1" />
        <path d="M9 9 Q4 18 -3 17 Q-5 14 -1 10 Z" fill="#fff" />
        <circle cx="19" cy="1" r="2" fill="#68b057" />
      </g>
    ),
  },
  {
    name: "Sublime Text",
    running: true,
    art: (
      <g>
        <rect x="-33" y="-33" width="66" height="66" rx="3" fill="#4a4a4a" />
        <path d="M-19 -13 L19 -25 V-13 L-2 -6 L19 0 V13 L-19 25 V13 L0 6 L-19 0 Z" fill="#f29a37" />
        <path d="M19 0 V13 L-4 5 L-19 0 V-2 Z" fill="#dd7f22" opacity=".35" />
      </g>
    ),
  },
  {
    name: "Slack",
    running: true,
    art: (
      <g>
        <circle r="33" fill="#f6f6f6" />
        <g fill="#66c5ea">
          <rect x="-21" y="-10" width="20" height="9" rx="4.500" />
          <path d="M-1 -12 V-17 A4.500 4.500 0 1 0 -5.500 -12 Z" />
        </g>
        <g fill="#59b388">
          <rect x="1" y="-21" width="9" height="20" rx="4.500" />
          <path d="M12 -1 H17 A4.500 4.500 0 1 0 12 -5.500 Z" />
        </g>
        <g fill="#e2b04a">
          <rect x="1" y="1" width="20" height="9" rx="4.500" />
          <path d="M1 12 V17 A4.500 4.500 0 1 0 5.500 12 Z" />
        </g>
        <g fill="#cf2f5b">
          <rect x="-10" y="1" width="9" height="20" rx="4.500" />
          <path d="M-12 1 H-17 A4.500 4.500 0 1 0 -12 5.500 Z" />
        </g>
        <circle cx="24" cy="-24" r="14" fill="#dc4a3c" />
        <circle cx="24" cy="-22.500" r="2.400" fill="#fff" />
      </g>
    ),
  },
  {
    name: "GitHub Desktop",
    running: true,
    art: (
      <g>
        <circle r="35.500" fill="#ececf0" />
        <circle r="30" fill="#f2f2f4" />
        <FaGithub x={-33} y={-34} size={66} color="#6b338f" />
      </g>
    ),
  },
];

const EXTRA_APPS: { name: string; running?: boolean; art: ReactNode }[] = [
  {
    name: "Sourcetree",
    running: true,
    art: (
      <g>
        <circle r="33" fill="url(#source)" />
        <path d="M0 -17 A14.500 14 0 0 1 5 10.500 V19 H-5 V10.500 A14.500 14 0 0 1 0 -17 Z" fill="#fff" />
        <circle cy="-2.500" r="5" fill="#1f5be0" />
      </g>
    ),
  },
  {
    name: "Anaconda",
    running: true,
    art: (
      <g>
        <clipPath id="ring">
          <path d="M0 -33 A33 33 0 1 1 0 33 A33 33 0 1 1 0 -33 Z M1 -23 A22.500 22.500 0 1 0 1 22 A22.500 22.500 0 1 0 1 -23 Z" clipRule="evenodd" />
        </clipPath>
        <g clipPath="url(#ring)">
          <rect x="-34" y="-34" width="68" height="68" fill="#65ad3f" />
          <path d="M1 -34 L-3 -28 L4 -22 M-8 -34 L-9 -20 M-16 -30 L-8 -24 L-2 -34 M-14 -28 L-16 -14 M-24 -24 L-12 -20 M-20 -26 L-24 -14 L-34 -12 M-24 -16 L-16 -10 M-30 -16 L-20 -4 M-34 -4 L-18 -12 M-34 -8 L-20 4 M-34 8 L-18 -2 M-34 4 L-16 14 M-30 18 L-18 6 M-28 12 L-24 26 M-28 16 L-10 20 M-20 28 L-16 12 M-22 24 L-8 22 M-14 32 L-12 18" stroke="#1e2129" strokeWidth="2.200" fill="none" />
        </g>
      </g>
    ),
  },
  {
    name: "Visual Studio Code",
    running: true,
    art: (
      <g>
        <path d="M-33 9 L-27 17 L-24 17 L17 -16 V-33 Z" fill="#2a6ea9" />
        <path d="M-33 -9 L-27 -17 L-24 -17 L17 16 V33 Z" fill="#3889cf" />
        <path d="M15 -33 L31 -27 Q33.500 -26 33.500 -23 V23 Q33.500 26 31 27 L15 33 Q17 31 17 29 V-29 Q17 -31 15 -33 Z" fill="#4ba0e8" />
      </g>
    ),
  },
  {
    name: "Docker",
    running: true,
    art: (
      <g>
        <circle r="38" fill="#7cc8f8" />
        <circle r="36.500" fill="#4aabf6" />
        <FaDocker x={-24} y={-28} size={52} color="#fff" />
      </g>
    ),
  },
  {
    name: "Terminal",
    running: true,
    art: (
      <g>
        <rect x="-33" y="-29" width="66" height="58" rx="3" fill="#b6b6b6" />
        <rect x="-31.500" y="-27.500" width="63" height="55" rx="2" fill="#000" />
        <rect x="-28" y="-24" width="56" height="48" fill="#232424" />
        <text x="-26" y="-11" fontFamily="Liberation Mono" fontWeight="700" fontSize="16" fill="#fff">&gt;_</text>
      </g>
    ),
  },
];

const STACKS: { name: string; running?: boolean; art: ReactNode }[] = [
  {
    name: "Downloads",
    art: (
      <g>
        <circle cy="-14" r="21" fill="#2563e8" />
        <path d="M-28 -22 H29 V18 H-28 Z" fill="#5aa6cf" />
        <path d="M-24 -30 H8 Q14 -16 25 -12 V34 H-24 Z" fill="#f8f8f8" />
        <path d="M8 -30 Q20 -24 25 -12 Q16 -18 9 -15 Q11 -24 8 -30 Z" fill="#d4d6d8" />
        <path d="M-4 -30 H3 V4 Q3 6 0 6 Q-4 6 -4 4 Z" fill="#55585b" />
        <path d="M-3 -27 h5 M-3 -23 h5 M-3 -19 h5 M-3 -8 h5" stroke="#c9cccf" strokeWidth="1.500" />
        <circle cy="-13" r="2.200" fill="#d6d8da" />
        <text y="30" textAnchor="middle" fontFamily="Inter" fontSize="8.500" fill="#6f6f6f">ZIP</text>
      </g>
    ),
  },
  {
    name: "Trash",
    art: (
      <g>
        <path d="M-24 -26 L-14 -35 L-6 -31 L2 -36 L10 -31 L18 -33 L24 -25 L14 -20 H-14 Z" fill="#e6e6e4" />
        <path d="M-14 -30 L-8 -26 L-2 -31 M4 -30 L10 -24 L16 -28" stroke="#55504a" strokeWidth="2.500" fill="none" />
        <circle cx="-6" cy="-27" r="2.500" fill="#6bb6c9" />
        <circle cx="10" cy="-28" r="2.500" fill="#b55d38" />
        <path d="M-27 -30 Q0 -12 27 -30 L22 26 Q20 34 0 34 Q-20 34 -22 26 Z" fill="url(#trash)" opacity=".92" />
        <path d="M-27 -30 Q0 -12 27 -30" fill="none" stroke="#8f9294" strokeWidth="1.500" />
        <path d="M-4 -10 Q4 -18 8 -17 Q4 -8 -4 -10 Z M-8 8 Q0 2 6 6 Q2 14 -8 8 Z" fill="#9b9da0" opacity=".55" />
      </g>
    ),
  },
];

function DockItem({ item }: { item: { name: string; running?: boolean; art: ReactNode } }) {
  return (
    <div className="flex w-20 shrink-0 flex-col items-center">
      <svg width="80" height="88" viewBox="-40 -44 80 88" role="img" aria-label={item.name}>
        {item.art}
      </svg>
      {item.running && <span className="-mt-1 size-2 rounded-full bg-[#9a9daa]" />}
    </div>
  );
}

function Gradients() {
  const lin = (id: string, a: string, b: string) => (
    <linearGradient id={id} x1="0" y1="0" x2="0" y2="1">
      <stop offset="0" stopColor={a} />
      <stop offset="1" stopColor={b} />
    </linearGradient>
  );
  const glow = (id: string, color: string, cx: number, cy: number, r: number) => (
    <radialGradient id={id} cx={cx} cy={cy} r={r}>
      <stop offset="0" stopColor={color} />
      <stop offset="1" stopColor={color} stopOpacity="0" />
    </radialGradient>
  );
  return (
    <svg width="0" height="0" className="absolute">
      <defs>
        {lin("finderBlue", "#5cccf8", "#2c69e6")}
        {lin("finderWhite", "#f8f8fa", "#dfe6f0")}
        {lin("launch", "#d5e2e6", "#77797a")}
        {lin("mailSky", "#2f7ad8", "#8fc2ee")}
        {lin("leather", "#b98f56", "#a67c45")}
        {lin("msg", "#6cc0f7", "#2c7ef0")}
        {lin("green", "#74e27e", "#49bf3c")}
        {lin("appstore", "#4cbcf6", "#2466e2")}
        {lin("prefs", "#d3e0e6", "#727475")}
        {lin("skype", "#4ab4ea", "#2c78cd")}
        {lin("source", "#2567f4", "#1a50c4")}
        {lin("trash", "#55585b", "#6f7274")}
        {lin("note", "#f0516c", "#6f7cf5")}
        <linearGradient id="itunes" x1="0" y1="0.200" x2="1" y2="0.800">
          <stop offset="0" stopColor="#ef4f74" />
          <stop offset=".5" stopColor="#c55fd8" />
          <stop offset="1" stopColor="#49b9f4" />
        </linearGradient>
        <radialGradient id="safari">
          <stop offset="0" stopColor="#49b4dd" />
          <stop offset="1" stopColor="#2a6be6" />
        </radialGradient>
        {glow("siriPink", "#d83a86", 0.6, 0.2, 0.5)}
        {glow("siriBlue", "#2a6fb8", 0.25, 0.8, 0.5)}
        {glow("siriGreen", "#1f7f88", 0.85, 0.7, 0.35)}
        {glow("siriGlow", "#ffffff", 0.5, 0.5, 0.5)}
      </defs>
    </svg>
  );
}

function Dock() {
  return (
    <nav className="absolute top-[1702px] left-[78px] flex h-[98px] w-[2723px] overflow-hidden rounded-t-[12px] border-2 border-b-0 border-[#484a4e] bg-linear-to-b from-[#23262d] to-[#1a1c28] px-1 shadow-[0_0_0_1.500px_rgba(0,0,0,0.700)]">
      {APPS.map((a) => (
        <DockItem key={a.name} item={a} />
      ))}
      <div className="flex w-9 shrink-0 justify-center pt-6">
        <span className="h-[46px] w-[2px] bg-[#555860]" />
      </div>
      {EXTRA_APPS.map((a) => (
        <DockItem key={a.name} item={a} />
      ))}
      <div className="flex w-9 shrink-0 justify-center pt-3">
        <span className="h-[70px] w-[2px] bg-[#60636a]" />
      </div>
      {STACKS.map((a) => (
        <DockItem key={a.name} item={a} />
      ))}
    </nav>
  );
}

export default function App() {
  return (
    <div className="relative h-[1800px] w-[2880px] overflow-hidden bg-linear-to-b from-[#02050c] to-[#0c1224] font-['Inter',sans-serif]">
      <Gradients />
      <MenuBar />
      <BackWindow />
      <BrowserWindow />
      <Dock />
    </div>
  );
}
